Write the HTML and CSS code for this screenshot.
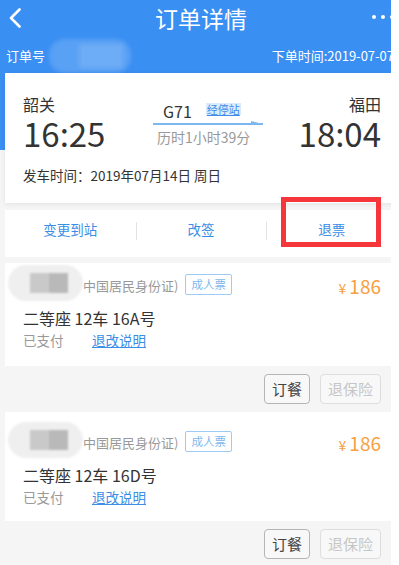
FILE: index.html
```html
<!DOCTYPE html>
<html lang="zh">
<head>
<meta charset="utf-8">
<title>订单详情</title>
<link rel="stylesheet" href="styles.css">
</head>
<body>
<div class="viewport">
  <div class="app">
    <header class="hdr">
      <div class="topbar">
        <svg class="back" width="14" height="20" viewBox="0 0 14 20"><polyline points="11.5,1.5 3,10 11.5,18.5" fill="none" stroke="#fff" stroke-width="2.6" stroke-linecap="round" stroke-linejoin="round"/></svg>
        <div class="title">订单详情</div>
        <div class="dots"><i></i><i></i><i></i></div>
      </div>
      <div class="orderrow">
        <div class="order-left"><span>订单号</span><span class="blur-no"><b></b><b></b></span></div>
        <span class="order-time">下单时间:2019-07-07</span>
      </div>
    </header>

    <section class="trip">
      <div class="trip-main">
        <div class="station">
          <div class="st-name">韶关</div>
          <div class="st-time">16:25</div>
        </div>
        <div class="train">
          <div class="train-no"><span>G71</span><span class="stops">经停站</span></div>
          <svg class="arrow" width="110" height="6" viewBox="0 0 110 6"><rect x="0" y="3" width="110" height="2" fill="#7db6f1"/><polygon points="98,1 110,4 98,4" fill="#7db6f1"/></svg>
          <div class="duration">历时1小时39分</div>
        </div>
        <div class="station station-end">
          <div class="st-name">福田</div>
          <div class="st-time">18:04</div>
        </div>
      </div>
      <div class="depart">发车时间：2019年07月14日 周日</div>
    </section>

    <nav class="actions">
      <a class="act">变更到站</a>
      <a class="act">改签</a>
      <a class="act">退票</a>
    </nav>

    <section class="pax pax-first">
      <div class="pax-row1">
        <span class="blur-name"><b></b><b></b></span>
        <span class="idtype">中国居民身份证)</span>
        <span class="tag">成人票</span>
        <span class="price"><small>¥</small>186</span>
      </div>
      <div class="seat">二等座 12车 16A号</div>
      <div class="paid"><span class="paid-st">已支付</span><a class="rule">退改说明</a></div>
    </section>
    <div class="pax-btns"><span class="btn">订餐</span><span class="btn btn-off">退保险</span></div>

    <section class="pax pax-second">
      <div class="pax-row1">
        <span class="blur-name"><b></b><b></b></span>
        <span class="idtype">中国居民身份证)</span>
        <span class="tag">成人票</span>
        <span class="price"><small>¥</small>186</span>
      </div>
      <div class="seat">二等座 12车 16D号</div>
      <div class="paid"><span class="paid-st">已支付</span><a class="rule">退改说明</a></div>
    </section>
    <div class="pax-btns"><span class="btn">订餐</span><span class="btn btn-off">退保险</span></div>

    <div class="redbox"></div>
  </div>
</div>
</body>
</html>
```

FILE: styles.css
```css
* { box-sizing: border-box; }
body {
  margin: 0;
  background: #fff;
  font-family: "Noto Sans CJK SC", "Noto Sans", sans-serif;
  color: #333;
}
.viewport {
  width: 391px;
  height: 565px;
  overflow: hidden;
  position: relative;
}
.app {
  width: 402px;
  min-height: 565px;
  background: #f5f5f5;
  position: relative;
}

/* header */
.hdr {
  background: #3a8ff3;
  color: #fff;
  height: 150px;
}
.topbar {
  height: 38px;
  display: flex;
  align-items: center;
  position: relative;
  padding: 0 8px;
}
.back { display: block; margin-top: -3px; }
.title {
  position: absolute;
  left: 0;
  right: 0;
  text-align: center;
  font-size: 23px;
  line-height: 38px;
  margin-top: -2px;
  pointer-events: none;
}
.dots {
  margin-left: auto;
  display: flex;
  gap: 5px;
  margin-top: -4px;
}
.dots i {
  display: block;
  width: 4px;
  height: 4px;
  border-radius: 50%;
  background: #fff;
}
.orderrow {
  height: 34px;
  display: flex;
  align-items: center;
  justify-content: space-between;
  padding: 0 8px 0 6px;
  font-size: 13px;
  white-space: nowrap;
}
.order-left { display: flex; align-items: center; }
.blur-no {
  display: flex;
  width: 82px;
  height: 34px;
  margin-left: 4px;
  margin-top: 2px;
  background: rgba(255,255,255,0.16);
  border-radius: 16px;
  filter: blur(2px);
  align-items: center;
  padding-left: 30px;
}
.blur-no b {
  display: block;
  width: 22px;
  height: 24px;
  background: rgba(255,255,255,0.12);
}

/* trip card */
.trip {
  margin: -77px 5px 0;
  background: #fff;
  padding: 20px 16px 18px 18px;
  box-shadow: 0 1px 5px rgba(0,0,0,0.08);
  position: relative;
}
.trip-main { display: flex; }
.station { flex: 0 0 130px; }
.station-end { flex: 1; text-align: right; }
.st-name { font-size: 16px; line-height: 22px; }
.st-time { font-size: 33px; line-height: 36px; letter-spacing: 0; }
.train { flex: 0 0 110px; padding-top: 7px; }
.train-no {
  display: flex;
  align-items: center;
  padding-left: 10px;
  font-size: 16px;
  line-height: 22px;
}
.stops {
  margin-left: 14px;
  background: #dcebfc;
  color: #3d8de8;
  font-size: 11px;
  line-height: 12px;
  padding: 0 1px;
  text-decoration: underline;
  margin-top: -4px;
}
.arrow { display: block; margin-top: -2px; }
.duration {
  font-size: 14px;
  line-height: 20px;
  color: #999;
  padding-left: 4px;
  margin-top: 1px;
}
.depart { font-size: 13.5px; line-height: 20px; margin-top: 14px; }

/* actions */
.actions {
  margin: 7px 5px 0;
  background: #fff;
  display: grid;
  grid-template-columns: 1fr 1fr 1fr;
  padding: 9px 0 18px;
}
.act {
  text-align: center;
  color: #3a8ee6;
  font-size: 13.5px;
  line-height: 20px;
  position: relative;
}
.act + .act::before {
  content: "";
  position: absolute;
  left: 0;
  top: 3px;
  height: 18px;
  width: 1px;
  background: #e3e3e3;
}

/* passenger */
.pax {
  margin: 6px 5px 0;
  background: #fff;
  padding: 2px 16px 16px 18px;
}
.pax-second { margin-top: 0; padding-top: 10px; padding-bottom: 14px; }
.pax-row1 {
  display: flex;
  align-items: center;
  height: 36px;
  margin-left: -15px;
}
.blur-name {
  display: flex;
  width: 75px;
  height: 36px;
  border-radius: 18px;
  background: #efefef;
  align-items: center;
  padding-left: 22px;
  filter: blur(1px);
}
.blur-name b {
  display: block;
  width: 19px;
  height: 20px;
  background: #c9c9c9;
}
.blur-name b + b { background: #b9b9b9; }
.idtype {
  font-size: 13px;
  color: #999;
  margin-top: 4px;
}
.tag {
  margin-left: 7px;
  border: 1px solid #9fcaf3;
  border-radius: 2px;
  color: #82b8ee;
  font-size: 11.5px;
  line-height: 19px;
  padding: 0 5px;
  margin-top: 3px;
}
.price {
  margin-left: auto;
  color: #f7a042;
  font-size: 19px;
  margin-top: 4px;
}
.price small { font-size: 14px; margin-right: 3px; }
.seat { font-size: 16px; line-height: 24px; margin-top: 5px; }
.paid { font-size: 13.5px; line-height: 20px; display: flex; }
.paid-st { color: #999; width: 69px; }
.rule { color: #3a8ee6; text-decoration: underline; }

.pax-btns {
  display: flex;
  justify-content: flex-end;
  gap: 10px;
  padding: 8px 21px 8px 0;
}
.pax-btns:last-of-type { padding-top: 9px; }
.btn {
  height: 30px;
  line-height: 28px;
  padding: 0 7px;
  border: 1px solid #b5b5b5;
  border-radius: 4px;
  font-size: 15px;
  color: #444;
  background: #f8f8f8;
}
.btn-off { border-color: #dedede; color: #c6c6c6; }

/* highlight overlay */
.redbox {
  position: absolute;
  left: 281px;
  top: 197px;
  width: 100px;
  height: 50px;
  border: 5px solid #f5363a;
}
```
